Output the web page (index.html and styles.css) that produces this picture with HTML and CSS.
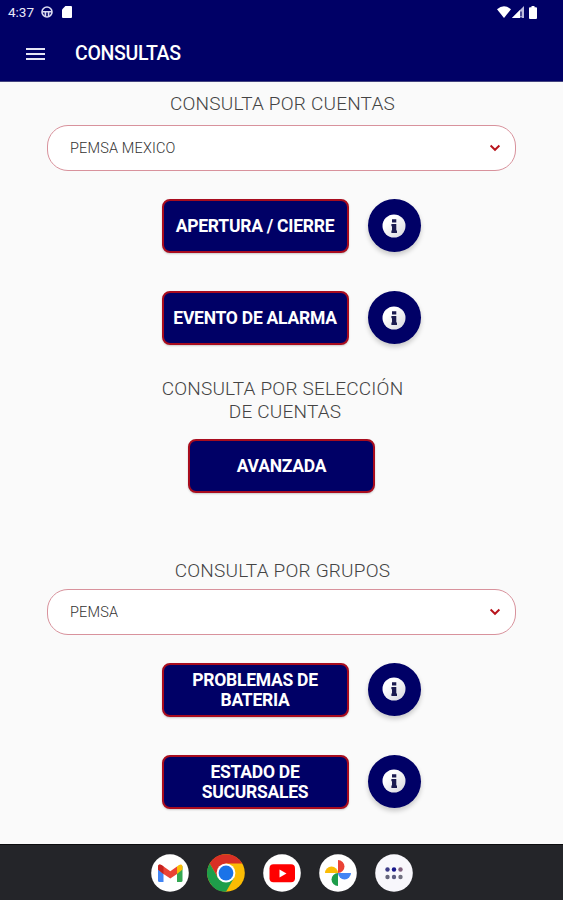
FILE: index.html
```html
<!DOCTYPE html>
<html lang="es">
<head>
    <meta charset="UTF-8">
    <meta name="viewport" content="width=device-width, initial-scale=1.0">
    <title>Consultas</title>
    <link rel="stylesheet" href="styles.css">
</head>
<body>
    <svg width="0" height="0" class="defs">
        <defs>
            <linearGradient id="shade" x1="0" y1="0" x2="1" y2="1">
                <stop offset="0.3" stop-color="#fff"/>
                <stop offset="1" stop-color="#d5d5dc"/>
            </linearGradient>
            <symbol id="info" viewBox="0 0 24 24">
                <circle cx="12" cy="12" r="11.5" fill="url(#shade)"/>
                <path d="M10 5.200h4.300v3.400H10zM9.400 10h4.900v6.600h.7v2.300H9.400v-2.300h.6v-4.300h-.6z" fill="#1b1b50"/>
            </symbol>
            <symbol id="arrow" viewBox="0 0 12 8">
                <path d="M1.600 1.500L6 5.800l4.400-4.300" fill="none" stroke="#b8141c" stroke-width="1.900"/>
            </symbol>
        </defs>
    </svg>

    <header>
        <div class="status">
            <span class="time">4:37</span>
            <svg class="wheel" width="12" height="12" viewBox="0 0 12 12">
                <g fill="none" stroke="#dcdcf2" stroke-width="1.6">
                    <circle cx="6" cy="6" r="5"/>
                    <path d="M1 5.700h10M4.400 6v4.500M7.600 6v4.500"/>
                </g>
            </svg>
            <svg class="card" width="10" height="12" viewBox="0 0 10 12">
                <path d="M3.400 0H9q1 0 1 1v10q0 1-1 1H1q-1 0-1-1V3.500z" fill="#fff"/>
            </svg>
            <div class="signals">
                <svg width="14" height="12" viewBox="0 0 14 12">
                    <path d="M0 3.200Q7-2.800 14 3.200L7 12z" fill="#fff"/>
                </svg>
                <svg width="12" height="12" viewBox="0 0 12 12">
                    <path d="M0 12L12 0v12z" fill="#b9b9dc"/>
                    <path d="M0 12L8 4v8z" fill="#fff"/>
                    <path d="M9 5.500v4.800M9 11v1" stroke="#000066" stroke-width="1.2"/>
                </svg>
                <svg width="8" height="13" viewBox="0 0 8 13">
                    <path d="M2.500 0h3v1.300H7q1 0 1 1V12q0 1-1 1H1q-1 0-1-1V2.300q0-1 1-1h1.500z" fill="#fff"/>
                </svg>
            </div>
        </div>
        <div class="toolbar">
            <svg width="19" height="14" viewBox="0 0 19 14">
                <path d="M0 2h19M0 7h19M0 12h19" stroke="#e4e4f4" stroke-width="2.2"/>
            </svg>
            <h1>CONSULTAS</h1>
        </div>
    </header>

    <main>
        <section class="cuentas">
            <h2>CONSULTA POR CUENTAS</h2>
            <div class="select">
                <span>PEMSA MEXICO</span>
                <svg width="12" height="8"><use href="#arrow"/></svg>
            </div>
            <div class="row">
                <button class="btn">APERTURA / CIERRE</button>
                <button class="round"><svg width="24" height="24"><use href="#info"/></svg></button>
            </div>
            <div class="row">
                <button class="btn">EVENTO DE ALARMA</button>
                <button class="round"><svg width="24" height="24"><use href="#info"/></svg></button>
            </div>
        </section>

        <section class="seleccion">
            <h2>CONSULTA POR SELECCIÓN<br><span>DE CUENTAS</span></h2>
            <button class="btn">AVANZADA</button>
        </section>

        <section class="grupos">
            <h2>CONSULTA POR GRUPOS</h2>
            <div class="select">
                <span>PEMSA</span>
                <svg width="12" height="8"><use href="#arrow"/></svg>
            </div>
            <div class="row">
                <button class="btn">PROBLEMAS DE<br>BATERIA</button>
                <button class="round"><svg width="24" height="24"><use href="#info"/></svg></button>
            </div>
            <div class="row">
                <button class="btn">ESTADO DE<br>SUCURSALES</button>
                <button class="round"><svg width="24" height="24"><use href="#info"/></svg></button>
            </div>
        </section>
    </main>

    <footer>
        <!-- Gmail -->
        <svg viewBox="0 0 38 38">
            <circle cx="19" cy="19" r="18.800" fill="#fff"/>
            <path d="M7 12v14.500q0 1.500 1.500 1.500H12.500V15z" fill="#4285f4"/>
            <path d="M31.500 12v14.500q0 1.500-1.500 1.500H26V15z" fill="#34a853"/>
            <path d="M26 12.500l2-1.500q3.500-1.500 3.500 2v2.500L26 20z" fill="#fbbc04"/>
            <path d="M7 15.500V13q0-3.500 3.500-2l8.800 6.300L26 12.500V20l-6.700 4.500L12.500 20z" fill="#ea4335"/>
            <path d="M7 15.500V13q0-3.500 3.500-2l2 1.500V20z" fill="#c5221f"/>
        </svg>
        <!-- Chrome -->
        <svg viewBox="0 0 38 38">
            <circle cx="19" cy="19" r="18.800" fill="#fbbc04"/>
            <path d="M2.700 9.600A18.800 18.800 0 0 1 35.300 9.600H19L10.900 23.700z" fill="#d93025"/>
            <path d="M2.700 9.600A18.800 18.800 0 0 0 19 37.800L27.100 23.700H10.900z" fill="#1e9e4a"/>
            <circle cx="19" cy="19" r="9.400" fill="#fff"/>
            <circle cx="19" cy="19" r="7.400" fill="#1a73e8"/>
        </svg>
        <!-- YouTube -->
        <svg viewBox="0 0 38 38">
            <circle cx="19" cy="19" r="18.800" fill="#fff"/>
            <rect x="6.500" y="10.300" width="25.500" height="18" rx="4" fill="#f00"/>
            <path d="M16.500 15.500v8l7-4z" fill="#fff"/>
        </svg>
        <!-- Photos -->
        <svg viewBox="0 0 38 38">
            <circle cx="19" cy="19" r="18.800" fill="#fff"/>
            <path d="M19 6a6.500 6.500 0 0 1 0 13z" fill="#ea4335"/>
            <path d="M32 19a6.500 6.500 0 0 1-13 0z" fill="#4285f4"/>
            <path d="M19 32a6.500 6.500 0 0 1 0-13z" fill="#1e9e4a"/>
            <path d="M6 19a6.500 6.500 0 0 1 13 0z" fill="#fbbc04"/>
        </svg>
        <!-- App drawer -->
        <svg viewBox="0 0 38 38">
            <circle cx="19" cy="19" r="18.800" fill="#f8f7fc"/>
            <circle cx="12.500" cy="15.500" r="2.200" fill="#3c3c88"/>
            <circle cx="19" cy="15.500" r="2.200" fill="#17178c"/>
            <circle cx="25.500" cy="15.500" r="2.200" fill="#80607e"/>
            <circle cx="12.500" cy="23" r="2.200" fill="#66667c"/>
            <circle cx="19" cy="23" r="2.200" fill="#5c5c80"/>
            <circle cx="25.500" cy="23" r="2.200" fill="#707080"/>
        </svg>
    </footer>
</body>
</html>
```
FILE: styles.css
```css
* {
    box-sizing: border-box;
}

body {
    display: flex;
    flex-direction: column;
    height: 900px;
    margin: 0;
    background-color: #fafafa;
    font-family: Roboto, sans-serif;
    overflow: hidden;
}

svg {
    display: block;
    flex: none;
}

.defs {
    position: absolute;
}

header {
    height: 82px;
    background-color: #000066;
    border-bottom: 1px solid #44447f;
    color: #fff;
}

.status {
    display: flex;
    align-items: center;
    height: 24px;
    padding: 0 26px 0 8px;
}

.time {
    width: 33px;
    font-size: 13.5px;
    color: #e8e8f8;
}

.card {
    margin-left: 9px;
}

.signals {
    display: flex;
    margin-left: auto;
    gap: 1px;
}

.signals svg:last-child {
    margin-left: 4px;
}

.toolbar {
    display: flex;
    align-items: center;
    height: 59px;
    padding-left: 26px;
    gap: 30px;
}

h1 {
    margin: 0;
    font-size: 19.5px;
    font-weight: 500;
    letter-spacing: -0.3px;
}

main {
    flex: 1;
    padding-top: 11px;
}

section {
    display: flex;
    flex-direction: column;
    align-items: center;
}

h2 {
    margin: 0;
    padding-left: 2px;
    font-size: 19px;
    font-weight: 300;
    line-height: 22.5px;
    letter-spacing: 0.2px;
    text-align: center;
    color: #444;
}

h2 span {
    padding-left: 5px;
}

.select {
    display: flex;
    align-items: center;
    justify-content: space-between;
    width: 469px;
    height: 46px;
    margin-top: 9.5px;
    padding: 0 14px 0 22px;
    border: 1px solid #d8929c;
    border-radius: 21px;
    background-color: #fff;
    font-size: 14.5px;
    font-weight: 350;
    letter-spacing: 0.15px;
    color: #333;
}

.select span {
    padding-top: 1px;
}

.row {
    display: flex;
    gap: 19px;
    margin: 28px 0 0 19px;
}

.row + .row {
    margin-top: 38px;
}

.btn {
    width: 187px;
    height: 54px;
    padding: 0;
    border: 2px solid #a80c1e;
    border-radius: 8px;
    background-color: #000066;
    box-shadow: 0 1px 2px rgba(0, 0, 0, 0.2);
    font-family: inherit;
    font-size: 17.5px;
    font-weight: 700;
    line-height: 20px;
    letter-spacing: -0.25px;
    color: #fff;
}

.round {
    display: flex;
    align-items: center;
    justify-content: center;
    width: 53px;
    height: 53px;
    padding: 0;
    border: none;
    border-radius: 50%;
    background-color: #000066;
    box-shadow: 0 3px 5px rgba(0, 0, 0, 0.2);
}

.seleccion {
    margin-top: 33px;
}

.seleccion .btn {
    margin-top: 16px;
}

.grupos {
    margin-top: 67px;
}

.grupos .select {
    margin-top: 6px;
}

footer {
    display: flex;
    align-items: center;
    justify-content: center;
    gap: 18px;
    height: 56px;
    border-top: 1px solid #0c0c0e;
    background-color: #242529;
}

footer svg {
    width: 38px;
    height: 38px;
}
```
